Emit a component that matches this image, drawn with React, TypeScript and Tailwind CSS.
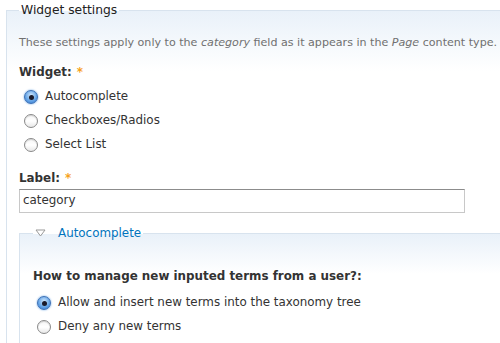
import type { ReactNode } from 'react'

const font = { fontFamily: '"DejaVu Sans", Verdana, sans-serif' }

function Radio({ checked, label }: { checked?: boolean; label: string }) {
  return (
    <label className="flex items-center gap-[7px] h-[24px] pl-[4px] text-[11.9px] text-[#333]">
      {checked ? (
        <span className="w-[14px] h-[14px] rounded-full border border-[#3a6fb5] bg-[radial-gradient(circle_at_50%_35%,#cfe6fb_0%,#6aa8e8_55%,#2f77d0_100%)] shadow-[0_0_2px_#5a9ae0] flex items-center justify-center">
          <span className="w-[5px] h-[5px] rounded-full bg-[#1a1a2a]" />
        </span>
      ) : (
        <span className="w-[14px] h-[14px] rounded-full border border-[#8a8a8a] bg-[linear-gradient(#f4f4f4,#ffffff_50%,#e8e8e8)] shadow-[inset_0_1px_1px_rgba(0,0,0,0.15)]" />
      )}
      <span>{label}</span>
    </label>
  )
}

function Required({ children }: { children: ReactNode }) {
  return (
    <div className="text-[11.9px] font-bold text-[#333] h-[20px] flex items-center">
      {children}
      <span className="ml-[5px] text-[#f7a21a] font-bold">*</span>
    </div>
  )
}

export default function App() {
  return (
    <div className="w-[500px] h-[343px] overflow-hidden bg-white" style={font}>
      <fieldset className="ml-[6px] mt-[2px] w-[520px] border-l border-t border-[#d8e3ee] pl-[12px] bg-[linear-gradient(#e9f1f9,#ffffff_60px)]">
        <legend className="px-[2px] text-[12.3px] leading-[16px] text-[#222]">Widget settings</legend>

        <p className="mt-[18px] text-[11.1px] text-[#707070] leading-[14px]">
          These settings apply only to the <em>category</em> field as it appears in the <em>Page</em> content type.
        </p>

        <div className="mt-[13px]">
          <Required>Widget:</Required>
        </div>
        <div className="mt-[2px] pl-[1px] flex flex-col">
          <Radio checked label="Autocomplete" />
          <Radio label="Checkboxes/Radios" />
          <Radio label="Select List" />
        </div>

        <div className="mt-[12px]">
          <Required>Label:</Required>
        </div>
        <div className="w-[446px] h-[24px] border border-[#c8c8c8] border-t-[#8c8c8c] bg-white flex items-center px-[3px] text-[11.9px] text-[#333]">
          category
        </div>

        <fieldset className="mt-[12px] w-[520px] border-l border-t border-[#d8e3ee] pl-[13px] bg-[linear-gradient(#e9f1f9,#ffffff_40px)] pb-[20px]">
          <legend className="flex items-center pl-[2px] pr-[2px] text-[11.9px] leading-[16px] text-[#0074bd]">
            <svg width="11" height="8" viewBox="0 0 11 8" className="mr-[12px]">
              <path d="M1 1 H10 L5.5 7 Z" fill="#fff" stroke="#999" strokeWidth="1" />
            </svg>
            Autocomplete
          </legend>

          <div className="mt-[26px] text-[11.9px] font-bold text-[#333] h-[20px] flex items-center">
            How to manage new inputed terms from a user?:
          </div>
          <div className="mt-[4px] flex flex-col">
            <Radio checked label="Allow and insert new terms into the taxonomy tree" />
            <Radio label="Deny any new terms" />
          </div>
        </fieldset>
      </fieldset>
    </div>
  )
}
